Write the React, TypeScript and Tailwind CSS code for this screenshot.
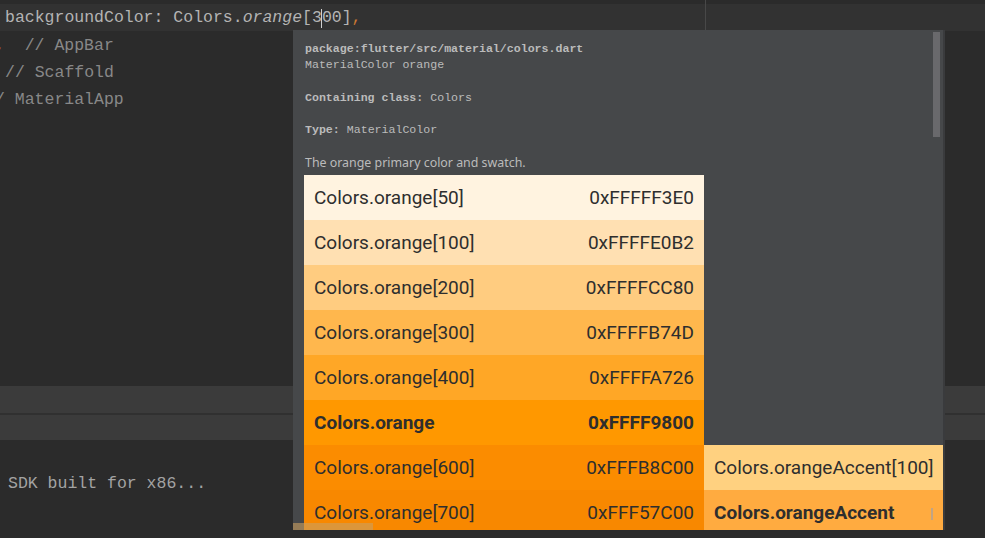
import React from 'react';

const MONO = { fontFamily: '"Liberation Mono", "DejaVu Sans Mono", monospace' };

type Swatch = { name: string; hex: string; bg: string; bold?: boolean; accent?: { name: string; bg: string; bold?: boolean } };

const SWATCHES: Swatch[] = [
  { name: 'Colors.orange[50]', hex: '0xFFFFF3E0', bg: 'bg-[#fff3e0]' },
  { name: 'Colors.orange[100]', hex: '0xFFFFE0B2', bg: 'bg-[#ffe0b2]' },
  { name: 'Colors.orange[200]', hex: '0xFFFFCC80', bg: 'bg-[#ffcc80]' },
  { name: 'Colors.orange[300]', hex: '0xFFFFB74D', bg: 'bg-[#ffb74d]' },
  { name: 'Colors.orange[400]', hex: '0xFFFFA726', bg: 'bg-[#ffa726]' },
  { name: 'Colors.orange', hex: '0xFFFF9800', bg: 'bg-[#ff9800]', bold: true },
  { name: 'Colors.orange[600]', hex: '0xFFFB8C00', bg: 'bg-[#fb8c00]', accent: { name: 'Colors.orangeAccent[100]', bg: 'bg-[#ffd180]' } },
  { name: 'Colors.orange[700]', hex: '0xFFF57C00', bg: 'bg-[#f88800]', accent: { name: 'Colors.orangeAccent', bg: 'bg-[#ffab40]', bold: true } },
];

const DocPopup: React.FC = () => {
  return (
    <div className="absolute left-[293px] top-[30px] w-[652px] h-[500px] bg-[#46484a] border-r-2 border-[#3a3b3d] overflow-hidden">
      {/* doc text */}
      <div className="pl-[12px] pt-[11px] text-[11.6px] leading-[16.4px] text-[#bbbbbb]" style={MONO}>
        <div className="font-bold">package:flutter/src/material/colors.dart</div>
        <div>MaterialColor orange</div>
        <div className="h-[16px]" />
        <div><span className="font-bold">Containing class:</span> Colors</div>
        <div className="h-[16px]" />
        <div><span className="font-bold">Type:</span> MaterialColor</div>
        <div className="h-[16px]" />
      </div>
      <div className="pl-[12px] text-[12.4px] leading-[16px] text-[#bbbbbb]" style={{ fontFamily: '"Noto Sans", sans-serif' }}>
        The orange primary color and swatch.
      </div>

      {/* swatch table */}
      <div className="mt-[4px] ml-[11px] grid grid-cols-[400px_239px] text-[19px] text-[#2e2e2e]" style={{ fontFamily: 'Roboto, sans-serif' }}>
        {SWATCHES.map((s) => (
          <React.Fragment key={s.name}>
            <div className={`${s.bg} h-[45px] px-[10px] pt-[3px] flex items-center justify-between ${s.bold ? 'font-bold' : ''}`}>
              <span>{s.name}</span>
              <span>{s.hex}</span>
            </div>
            {s.accent ? (
              <div className={`${s.accent.bg} h-[45px] px-[10px] pt-[3px] flex items-center ${s.accent.bold ? 'font-bold' : ''}`}>
                {s.accent.name}
              </div>
            ) : (
              <div className="h-[45px]" />
            )}
          </React.Fragment>
        ))}
      </div>

      {/* scrollbars */}
      <div className="absolute right-[3px] top-[2px] w-[7px] h-[105px] bg-[#77787a]/70" />
      <div className="absolute left-0 bottom-0 w-[80px] h-[7px] bg-[#c9a060]/60" />
      <div className="absolute right-[10px] bottom-[10px] w-[2px] h-[12px] bg-[#9aa0b0]/60" />
    </div>
  );
};

const App: React.FC = () => {
  return (
    <div className="relative w-[985px] h-[538px] bg-[#2b2b2b] overflow-hidden">
      <div className="flex flex-col text-[16.5px] whitespace-pre" style={MONO}>
        {/* current line */}
        <div className="mt-[4px] h-[27px] bg-[#323232] flex items-center pl-[5px] pt-[1px] text-[#b4b4b4]">
          <span>backgroundColor: Colors.</span>
          <span className="italic">orange</span>
          <span>[3</span>
          <span className="inline-block w-[1px] h-[19px] bg-[#d0d0d0] -mx-[0.5px]" />
          <span>00]</span>
          <span className="text-[#cc7832]">,</span>
        </div>
        <div className="mt-[1px] h-[27px] flex items-center pt-[2px] -ml-[5px] text-[#888888]">
          <span className="text-[#cc7832]">,</span>
          <span>  // AppBar</span>
        </div>
        <div className="h-[27px] flex items-center pt-[2px] pl-[5px] text-[#888888]">// Scaffold</div>
        <div className="h-[27px] flex items-center pt-[2px] -ml-[5px] text-[#888888]">/ MaterialApp</div>

        {/* tool window header bands */}
        <div className="mt-[273px] h-[27px] bg-[#3b3b3b]" />
        <div className="h-[2px] bg-[#303030]" />
        <div className="h-[25px] bg-[#3b3b3b]" />

        {/* run console */}
        <div className="mt-[30px] h-[27px] flex items-center pt-[2px] pl-[8px] text-[#a3a3a3]">SDK built for x86...</div>
      </div>

      {/* right margin guide */}
      <div className="absolute left-[705px] top-0 w-[1px] h-[30px] bg-[#484848]" />

      <DocPopup />
    </div>
  );
};

export default App;
